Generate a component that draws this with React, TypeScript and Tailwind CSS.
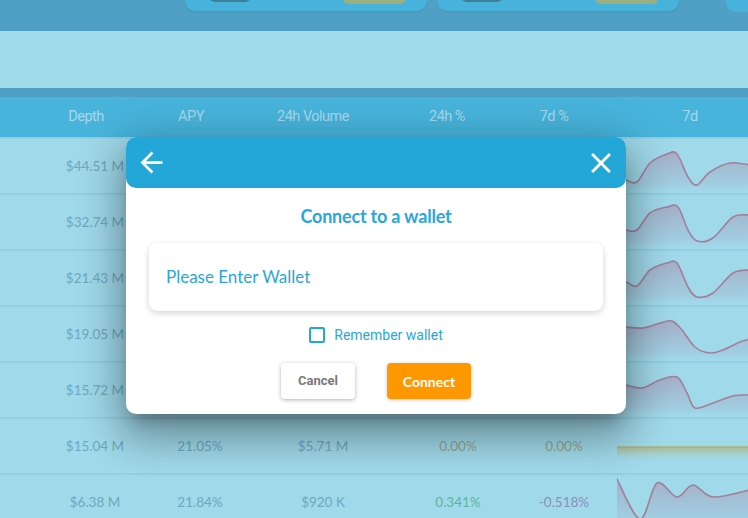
import React from 'react';

type Row = {
  depth: string;
  apy: string;
  volume: string;
  day: string;
  week: string;
  dayColor?: string;
  weekColor?: string;
  spark: [number, number][];
  flat?: boolean;
};

const rows: Row[] = [
  { depth: '$44.51 M', apy: '', volume: '', day: '', week: '', spark: [[-2, 38], [9, 43], [20, 45], [33, 26], [50, 17], [60, 17], [71, 40], [80, 48], [93, 35], [113, 26], [133, 28]] },
  { depth: '$32.74 M', apy: '', volume: '', day: '', week: '', spark: [[-2, 34], [9, 37], [20, 37], [33, 20], [50, 14], [61, 14], [71, 37], [80, 48], [96, 45], [116, 24], [133, 22]] },
  { depth: '$21.43 M', apy: '', volume: '', day: '', week: '', spark: [[-2, 30], [9, 33], [20, 37], [33, 21], [50, 14], [60, 14], [71, 38], [80, 48], [96, 44], [116, 24], [133, 21]] },
  { depth: '$19.05 M', apy: '', volume: '', day: '', week: '', spark: [[-2, 20], [9, 22], [26, 23], [43, 18], [55, 16], [65, 25], [78, 42], [93, 48], [106, 45], [123, 37], [133, 34]] },
  { depth: '$15.72 M', apy: '', volume: '', day: '', week: '', spark: [[-2, 22], [9, 24], [25, 27], [43, 19], [60, 16], [70, 32], [78, 47], [96, 42], [116, 35], [133, 34]] },
  { depth: '$15.04 M', apy: '21.05%', volume: '$5.71 M', day: '0.00%', week: '0.00%', dayColor: 'text-[#8fa58c]', weekColor: 'text-[#8fa58c]', spark: [[-1, 30], [133, 30]], flat: true },
  { depth: '$6.38 M', apy: '21.84%', volume: '$920 K', day: '0.341%', week: '-0.518%', dayColor: 'text-[#5db59e]', weekColor: 'text-[#8a8fb8]', spark: [[-1, 4], [23, 46], [40, 10], [60, 24], [76, 12], [96, 24], [133, 17]] },
];

// catmull-rom -> cubic bezier
function smooth(pts: [number, number][]) {
  let d = `M${pts[0][0]},${pts[0][1]}`;
  for (let i = 0; i < pts.length - 1; i++) {
    const p0 = pts[i - 1] || pts[i];
    const p1 = pts[i];
    const p2 = pts[i + 1];
    const p3 = pts[i + 2] || p2;
    const c1x = p1[0] + (p2[0] - p0[0]) / 6;
    const c1y = p1[1] + (p2[1] - p0[1]) / 6;
    const c2x = p2[0] - (p3[0] - p1[0]) / 6;
    const c2y = p2[1] - (p3[1] - p1[1]) / 6;
    d += ` C${c1x},${c1y} ${c2x},${c2y} ${p2[0]},${p2[1]}`;
  }
  return d;
}

const Spark = ({ pts, id, flat }: { pts: [number, number][]; id: string; flat?: boolean }) => {
  const line = smooth(pts);
  const last = pts[pts.length - 1];
  const area = `${line} L${last[0]},56 L${pts[0][0]},56 Z`;
  return (
    <svg width="131" height="56" viewBox="0 0 131 56" className="block">
      <defs>
        <linearGradient id={id} x1="0" y1="0" x2="0" y2="1">
          {flat ? (
            <>
              <stop offset="0" stopColor="#b0b580" stopOpacity="0.9" />
              <stop offset="0.6" stopColor="#a0d9ea" stopOpacity="0" />
            </>
          ) : (
            <>
              <stop offset="0" stopColor="#a59fba" stopOpacity="0.75" />
              <stop offset="0.8" stopColor="#a4aac4" stopOpacity="0.25" />
              <stop offset="1" stopColor="#a0d9ea" stopOpacity="0" />
            </>
          )}
        </linearGradient>
      </defs>
      <path d={area} fill={`url(#${id})`} />
      <path d={line} fill="none" stroke={flat ? '#aab27d' : '#a27f9b'} strokeWidth="1.6" />
    </svg>
  );
};

const TopCard = ({ text }: { text: string }) => (
  <div className="shrink-0 w-[242px] h-[11px] rounded-b-[10px] bg-[#47b3dc] overflow-hidden flex items-end pl-[24px] shadow-[0_1px_2px_rgba(0,0,0,0.08)]">
    <div className="w-[42px] h-[20px] rounded-[6px] bg-[#3f7f98] mb-[9px]" />
    <div className="w-[92px] pl-[19px] mb-[10px] text-[12px] leading-[12px] font-bold text-white">{text}</div>
    <div className="w-[63px] h-[20px] rounded-[6px] bg-[#9daf7f] mb-[7px]" />
  </div>
);

export default function App() {
  return (
    <div className="relative w-[748px] h-[518px] overflow-hidden bg-[#a0d9ea] font-['Lato','Noto_Sans',sans-serif]">
      <div className="h-[31px] bg-[#4fa0c4] flex gap-[10px] pl-[185px]">
        <TopCard text="and Hankin" />
        <TopCard text="" />
        <div className="shrink-0 w-[40px] h-[12px] rounded-bl-[10px] bg-[#47b3dc] ml-[37px]" />
      </div>
      <div className="h-[57px] bg-[#a0dbea]" />
      <div className="h-[9px] bg-[#4fa0c4]" />
      <div className="h-[40px] bg-[#48b4dc] flex items-center text-[14.5px] tracking-[-0.5px] text-[#a6d9ec] font-['Roboto',sans-serif]">
        <div className="w-[46px]" />
        <div className="w-[80px] text-center">Depth</div>
        <div className="w-[130px] text-center">APY</div>
        <div className="w-[114px] text-center">24h Volume</div>
        <div className="w-[154px] text-center">24h %</div>
        <div className="w-[60px] text-center">7d %</div>
        <div className="w-[48px]" />
        <div className="w-[116px] text-center">7d</div>
      </div>
      {rows.map((r, i) => (
        <div key={i} className="h-[56px] flex items-center border-t-2 border-[#93cee1] text-[13.5px] text-[#6ea8bc]">
          <div className="w-[55px]" />
          <div className="w-[80px] text-center">{r.depth}</div>
          <div className="w-[130px] text-center">{r.apy}</div>
          <div className="w-[116px] text-center">{r.volume}</div>
          <div className={`w-[154px] text-center ${r.dayColor ?? ''}`}>{r.day}</div>
          <div className={`w-[58px] text-center ${r.weekColor ?? ''}`}>{r.week}</div>
          <div className="w-[24px]" />
          <div className="w-[131px] h-[54px] -mt-[2px] self-start">
            <Spark pts={r.spark} id={`g${i}`} flat={r.flat} />
          </div>
        </div>
      ))}

      {/* dialog */}
      <div className="absolute left-[126px] top-[137px] w-[500px] h-[277px] bg-white rounded-[10px] flex flex-col shadow-[0_11px_15px_-7px_rgba(0,0,0,0.28),0_24px_38px_3px_rgba(0,0,0,0.2),0_9px_46px_8px_rgba(0,0,0,0.2)]">
        <div className="h-[51px] bg-[#22a7d8] rounded-[10px] flex items-center justify-between pl-[9px] pr-[8px]">
          <svg width="33" height="33" viewBox="0 0 24 24" fill="white">
            <path d="M20 11H7.83l5.59-5.59L12 4l-8 8 8 8 1.41-1.41L7.83 13H20v-2z" />
          </svg>
          <svg width="34" height="34" viewBox="0 0 24 24" fill="white">
            <path d="M19 6.41L17.59 5 12 10.59 6.41 5 5 6.41 10.59 12 5 17.59 6.41 19 12 13.41 17.59 19 19 17.59 13.41 12z" />
          </svg>
        </div>
        <div className="pt-[17px] text-center text-[18px] leading-[22px] font-bold tracking-[-0.2px] text-[#2aa7d8]">Connect to a wallet</div>
        <div className="mx-[23px] mt-[16px] h-[68px] rounded-[8px] bg-white flex items-center pl-[17px] text-[17px] text-[#2aa7d8] shadow-[0_2px_6px_rgba(0,0,0,0.18)]">
          Please Enter Wallet
        </div>
        <div className="mt-[16px] flex items-center justify-center gap-[9px] font-['Roboto',sans-serif]">
          <div className="w-[16px] h-[16px] border-2 border-[#22a7d8] rounded-[2px]" />
          <span className="text-[14px] leading-[16px] text-[#2aa7d8]">Remember wallet</span>
        </div>
        <div className="mt-[20px] flex justify-center gap-[32px]">
          <button className="w-[74px] h-[36px] rounded-[4px] bg-white text-[13px] font-bold text-[#7a7a7a] font-['Roboto',sans-serif] shadow-[0_1px_4px_rgba(0,0,0,0.3)]">Cancel</button>
          <button className="w-[84px] h-[36px] rounded-[4px] bg-[#ff9800] text-[14px] font-bold text-white shadow-[0_1px_4px_rgba(0,0,0,0.2)]">Connect</button>
        </div>
      </div>
    </div>
  );
}
